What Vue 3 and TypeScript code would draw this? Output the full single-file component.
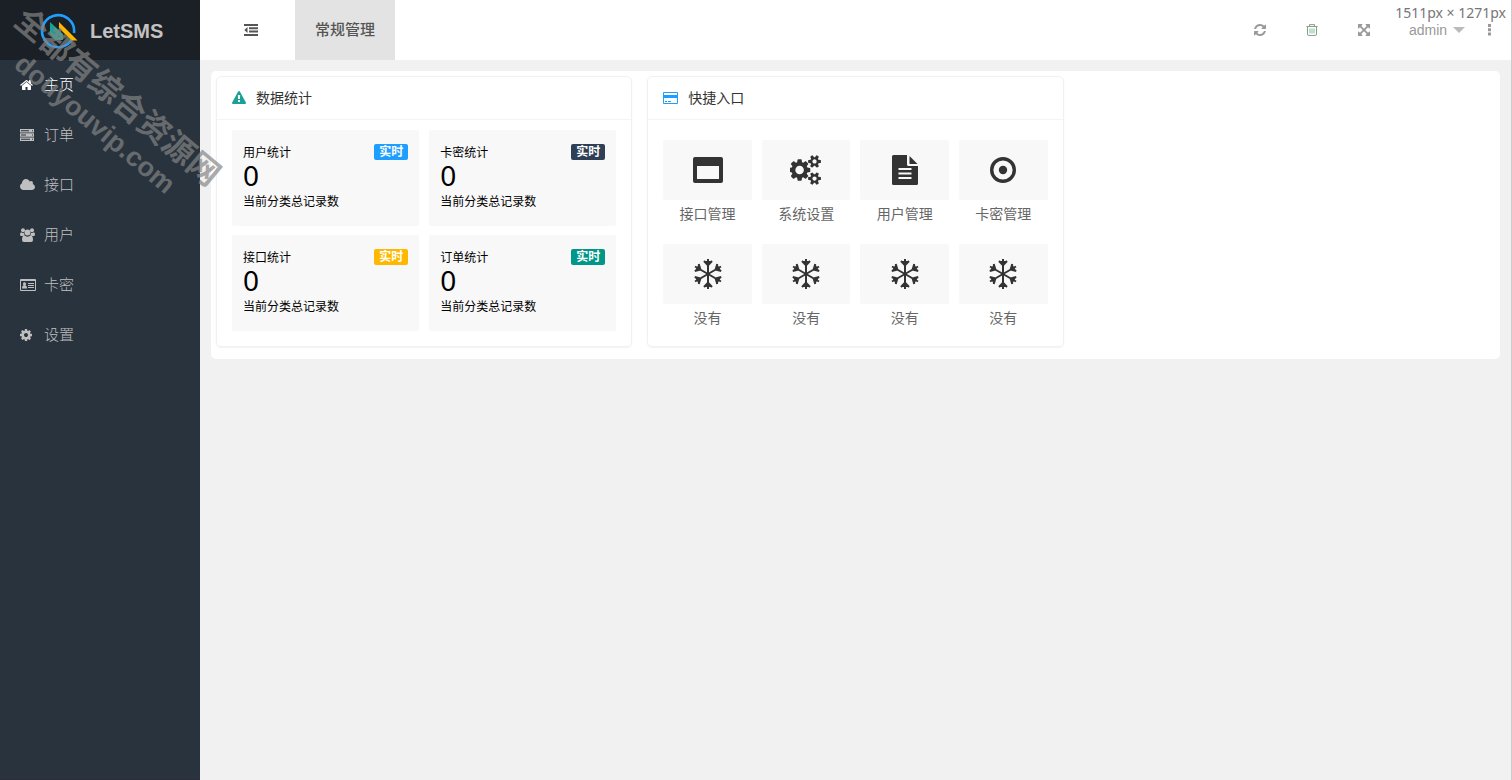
<script setup lang="ts">
import { ref } from 'vue'

interface MenuItem { key: string; label: string }
interface Stat { title: string; value: number; tone: string }
interface Shortcut { label: string; icon: string }

const active = ref('home')

const menu: MenuItem[] = [
  { key: 'home', label: '主页' },
  { key: 'order', label: '订单' },
  { key: 'api', label: '接口' },
  { key: 'users', label: '用户' },
  { key: 'card', label: '卡密' },
  { key: 'cog', label: '设置' },
]

const stats: Stat[] = [
  { title: '用户统计', value: 0, tone: 'blue' },
  { title: '卡密统计', value: 0, tone: 'navy' },
  { title: '接口统计', value: 0, tone: 'orange' },
  { title: '订单统计', value: 0, tone: 'green' },
]

const shortcuts: Shortcut[] = [
  { label: '接口管理', icon: 'window' },
  { label: '系统设置', icon: 'cogs' },
  { label: '用户管理', icon: 'file' },
  { label: '卡密管理', icon: 'target' },
  { label: '没有', icon: 'snow' },
  { label: '没有', icon: 'snow' },
  { label: '没有', icon: 'snow' },
  { label: '没有', icon: 'snow' },
]
</script>

<template>
  <div class="app">
    <aside class="side">
      <a class="brand" href="#">
        <svg class="logo" viewBox="1 0 38 36" aria-hidden="true">
          <path d="M33.8 24.5A16 16 0 1 1 35 20" fill="none" stroke="#1e9fff" stroke-width="2.6" />
          <path d="M11 9l13 12v6H11z" fill="#16a394" />
          <path d="M11 21l5 6h-5z" fill="#1a2026" />
          <path d="M20 9l18.500 18.500h-6L20 15z" fill="#ffb800" />
        </svg>
        <span>LetSMS</span>
      </a>
      <nav>
        <a
          v-for="item in menu"
          :key="item.key"
          href="#"
          class="menu-item"
          :class="{ active: active === item.key }"
          @click.prevent="active = item.key"
        >
          <svg v-if="item.key === 'home'" class="mi" viewBox="64 0 2304 1792"><path d="M1472 992v480q0 26-19 45t-45 19h-384v-384h-256v384h-384q-26 0-45-19t-19-45v-480q0-1 .5-3t.5-3l575-474 575 474q1 2 1 6zm223-69l-62 74q-8 9-21 11h-3q-13 0-21-7l-692-577-692 577q-12 8-24 7-13-2-21-11l-62-74q-8-10-7-23.500t11-21.500l719-599q32-26 76-26t76 26l244 204v-195q0-14 9-23t23-9h192q14 0 23 9t9 23v408l219 182q10 8 11 21.500t-7 23.500z" /></svg>
          <svg v-else-if="item.key === 'order'" class="mi" viewBox="0 0 18 14">
            <path fill-rule="evenodd" d="M0 1h14v3.500H0zM1 2.200v1h8v-1zM12 2.200v1h1v-1zM0 5.250h14v3.500H0zM1 6.500v1h5v-1zM12 6.500v1h1v-1zM0 9.500h14V13H0zM1 10.800v1h9v-1zM12 10.800v1h1v-1z" />
          </svg>
          <svg v-else-if="item.key === 'api'" class="mi" viewBox="64 0 2304 1792"><path d="M1984 1152q0 159-112.500 271.500t-271.500 112.500h-1088q-185 0-316.500-131.500t-131.500-316.500q0-132 71-241.500t187-163.500q-2-28-2-43 0-212 150-362t362-150q158 0 286.500 88t187.500 230q70-62 166-62 106 0 181 75t75 181q0 75-41 138 129 30 213 134.500t84 239.500z" /></svg>
          <svg v-else-if="item.key === 'users'" class="mi" viewBox="0 0 18 14">
            <circle cx="3" cy="2.200" r="2" /><circle cx="12" cy="2.200" r="2" />
            <circle cx="7.500" cy="4.500" r="3" />
            <path d="M1.200 4.300q1.200 1 2.700.500.100 1.600 1 2.400-1.300.100-2 .900H1.500Q0 8.100 0 6.700 0 4.500 1.200 4.300zM13.800 4.300q-1.200 1-2.700.500-.100 1.600-1 2.400 1.300.100 2 .900h1.400Q15 8.100 15 6.700q0-2.200-1.200-2.400zM4.500 7.600q3 2.200 6 0Q13 7.600 13 12q0 2-2 2H4q-2 0-2-2 0-4.400 2.500-4.400z" />
          </svg>
          <svg v-else-if="item.key === 'card'" class="mi" viewBox="0 0 18 14">
            <path fill-rule="evenodd" d="M1 1h14q1 0 1 1v10q0 1-1 1H1q-1 0-1-1V2q0-1 1-1zM1 3v9h14V3z" />
            <circle cx="4.500" cy="5.800" r="1.600" /><path d="M2 10.500q0-3.500 2.500-3.500T7 10.500zM8 5h6v1H8zM8 7h6v1H8zM8 9h6v1H8z" />
          </svg>
          <svg v-else class="mi" viewBox="128 0 2304 1792"><path d="M1152 896q0-106-75-181t-181-75-181 75-75 181 75 181 181 75 181-75 75-181zm512-109v222q0 12-8 23t-20 13l-185 28q-19 54-39 91 35 50 107 138 10 12 10 25t-9 23q-27 37-99 108t-94 71q-12 0-26-9l-138-108q-44 23-91 38-16 136-29 186-7 28-36 28h-222q-14 0-24.500-8.500t-11.500-21.500l-28-184q-49-16-90-37l-141 107q-10 9-25 9-14 0-25-11-126-114-165-168-7-10-7-23 0-12 8-23 15-21 51-66.500t54-70.500q-27-50-41-99l-183-27q-13-2-21-12.500t-8-23.500v-222q0-12 8-23t19-13l186-28q14-46 39-92-40-57-107-138-10-12-10-24 0-10 9-23 26-36 98.500-107.500t94.500-71.500q13 0 26 10l138 107q44-23 91-38 16-136 29-186 7-28 36-28h222q14 0 24.500 8.500t11.500 21.500l28 184q49 16 90 37l142-107q9-9 24-9 13 0 25 10 129 119 165 170 7 8 7 22 0 12-8 23-15 21-51 66.500t-54 70.500q26 50 41 98l183 28q13 2 21 12.500t8 23.500z" /></svg>
          <span class="label">{{ item.label }}</span>
        </a>
      </nav>
    </aside>

    <div class="main">
      <header class="top">
        <button class="fold" type="button" aria-label="收起菜单">
          <svg width="14" height="12" viewBox="0 0 14 12"><path d="M0 0h14v2H0zM5 3.300h9v2H5zM5 6.600h9v2H5zM0 10h14v2H0zM3.500 3v6L.300 6z" /></svg>
        </button>
        <button class="tab" type="button">常规管理</button>
        <div class="tools">
          <button class="tool" type="button" aria-label="刷新">
            <svg width="14" height="14" viewBox="0 0 1792 1792"><path d="M1639 1056q0 5-1 7-64 268-268 434.500t-478 166.500q-146 0-282.500-55t-243.500-157l-129 129q-19 19-45 19t-45-19-19-45v-448q0-26 19-45t45-19h448q26 0 45 19t19 45-19 45l-137 137q71 66 161 102t187 36q134 0 250-65t186-179q11-17 53-117 8-23 30-23h192q13 0 22.500 9.500t9.500 22.500zm25-800v448q0 26-19 45t-45 19h-448q-26 0-45-19t-19-45 19-45l138-138q-148-137-349-137-134 0-250 65t-186 179q-11 17-53 117-8 23-30 23h-199q-13 0-22.500-9.500t-9.500-22.500v-7q65-268 270-434.500t480-166.500q146 0 284 55.500t245 156.500l130-129q19-19 45-19t45 19 19 45z" /></svg>
          </button>
          <button class="tool" type="button" aria-label="清理缓存">
            <svg class="trash" width="12" height="12" viewBox="0 0 12 12"><path d="M.500 2.500h11M3.500 2.300V.600h5v1.700M1.500 2.700V10q0 1.500 1.300 1.500h6.400q1.300 0 1.300-1.500V2.700" stroke="#8f9a90" /><path d="M4 4.500v5M6 4.500v5M8 4.500v5" stroke="#7cc48c" /></svg>
          </button>
          <button class="tool" type="button" aria-label="全屏">
            <svg width="14" height="14" viewBox="0 0 1792 1792"><path d="M1411 541l-355 355 355 355 144-144q29-31 70-14 39 17 39 59v448q0 26-19 45t-45 19h-448q-42 0-59-40-17-39 14-69l144-144-355-355-355 355 144 144q31 30 14 69-17 40-59 40h-448q-26 0-45-19t-19-45v-448q0-42 40-59 39-17 69 14l144 144 355-355-355-355-144 144q-19 19-45 19-12 0-24-5-40-17-40-59v-448q0-26 19-45t45-19h448q42 0 59 40 17 39-14 69l-144 144 355 355 355-355-144-144q-31-30-14-69 17-40 59-40h448q26 0 45 19t19 45v448q0 42-39 59-13 5-25 5-26 0-45-19z" /></svg>
          </button>
          <button class="user" type="button">admin<i class="caret"></i></button>
          <button class="more" type="button" aria-label="更多">
            <svg width="3" height="12" viewBox="0 0 3 12"><path d="M0 0h3v3H0zM0 4.300h3v3H0zM0 8.600h3v3H0z" /></svg>
          </button>
        </div>
      </header>

      <main class="page">
        <div class="panel">
          <section class="card">
            <h2 class="card-head">
              <svg width="14" height="14" viewBox="0 0 1792 1792" fill="#1aa094"><path d="M1024 1375v-190q0-14-9.500-23.500t-22.500-9.500h-192q-13 0-22.500 9.500t-9.500 23.500v190q0 14 9.500 23.500t22.500 9.500h192q13 0 22.500-9.500t9.500-23.500zm-2-374l18-459q0-12-10-19-13-11-24-11h-220q-11 0-24 11-10 7-10 21l17 457q0 10 10 16.500t24 6.500h185q14 0 23.500-6.500t10.500-16.500zm-14-934l768 1408q35 63-2 126-17 29-46.500 46t-63.500 17h-1536q-34 0-63.500-17t-46.500-46q-37-63-2-126l768-1408q17-31 47-49t65-18 65 18 47 49z" /></svg>
              <span class="label">数据统计</span>
            </h2>
            <div class="stats">
              <div v-for="s in stats" :key="s.title" class="stat">
                <div class="stat-top">
                  <span>{{ s.title }}</span>
                  <b class="badge" :class="s.tone">实时</b>
                </div>
                <div class="value">{{ s.value }}</div>
                <div class="note">当前分类总记录数</div>
              </div>
            </div>
          </section>

          <section class="card">
            <h2 class="card-head">
              <svg width="15" height="12" viewBox="0 0 15 12" fill="#1e9fff"><path fill-rule="evenodd" d="M1 0h13q1 0 1 1v10q0 1-1 1H1q-1 0-1-1V1q0-1 1-1zM1 1v2h13V1zM1 6v5h13V6zM2 9h2v1H2zM5 9h3v1H5z" /></svg>
              <span class="label">快捷入口</span>
            </h2>
            <div class="shortcuts">
              <a v-for="(s, i) in shortcuts" :key="i" href="#" class="shortcut">
                <span class="tile">
                  <svg v-if="s.icon === 'window'" width="30" height="26" viewBox="0 0 30 26"><path fill-rule="evenodd" d="M2 0h26q2 0 2 2v22q0 2-2 2H2q-2 0-2-2V2q0-2 2-2zM4 9v13h22V9z" /></svg>
                  <svg v-else-if="s.icon === 'cogs'" width="32" height="30" viewBox="0 0 1920 1792"><path d="M832 896q0-106-75-181t-181-75-181 75-75 181 75 181 181 75 181-75 75-181zm768 512q0-52-38-90t-90-38-90 38-38 90q0 53 37.500 90.500t90.500 37.500 90.500-37.500 37.500-90.500zm0-1024q0-52-38-90t-90-38-90 38-38 90q0 53 37.500 90.500t90.500 37.500 90.500-37.500 37.500-90.500zm-384 421v185q0 10-7 19.500t-16 10.500l-155 24q-11 35-32 76 34 48 90 115 7 11 7 20 0 12-7 19-23 30-82.500 89.500t-78.500 59.500q-11 0-21-7l-115-90q-37 19-77 31-11 108-23 155-7 24-30 24h-186q-11 0-20-7.500t-10-17.500l-23-153q-34-10-75-31l-118 89q-7 7-20 7-11 0-21-8-144-133-144-160 0-9 7-19 10-14 41-53t47-61q-23-44-35-82l-152-24q-10-1-17-9.500t-7-19.500v-185q0-10 7-19.500t16-10.500l155-24q11-35 32-76-34-48-90-115-7-11-7-20 0-12 7-20 22-30 82-89t79-59q11 0 21 7l115 90q34-18 77-32 11-108 23-154 7-24 30-24h186q11 0 20 7.500t10 17.500l23 153q34 10 75 31l118-89q8-7 20-7 11 0 21 8 144 133 144 160 0 8-7 19-12 16-42 54t-45 60q23 48 34 82l152 23q10 2 17 10.500t7 19.500zm640 533v140q0 16-149 31-12 27-30 52 51 113 51 138 0 4-4 7-122 71-124 71-8 0-46-47t-52-68q-20 2-30 2t-30-2q-14 21-52 68t-46 47q-2 0-124-71-4-3-4-7 0-25 51-138-18-25-30-52-149-15-149-31v-140q0-16 149-31 13-29 30-52-51-113-51-138 0-4 4-7 4-2 35-20t59-34 30-16q8 0 46 46.500t52 67.500q20-2 30-2t30 2q51-71 92-112l6-2q4 0 124 70 4 3 4 7 0 25-51 138 17 23 30 52 149 15 149 31zm0-1024v140q0 16-149 31-12 27-30 52 51 113 51 138 0 4-4 7-122 71-124 71-8 0-46-47t-52-68q-20 2-30 2t-30-2q-14 21-52 68t-46 47q-2 0-124-71-4-3-4-7 0-25 51-138-18-25-30-52-149-15-149-31v-140q0-16 149-31 13-29 30-52-51-113-51-138 0-4 4-7 4-2 35-20t59-34 30-16q8 0 46 46.500t52 67.500q20-2 30-2t30 2q51-71 92-112l6-2q4 0 124 70 4 3 4 7 0 25-51 138 17 23 30 52 149 15 149 31z" /></svg>
                  <svg v-else-if="s.icon === 'file'" width="26" height="30" viewBox="0 0 26 30"><path fill-rule="evenodd" d="M1.500 0H15v9.500q0 1.500 1.500 1.500H26v17.500q0 1.500-1.500 1.500h-23Q0 30 0 28.500v-27Q0 0 1.500 0zM6.500 13v2h13v-2zM6.500 17.500v2h13v-2zM6.500 22v2h13v-2zM17.500 1l8 8h-8z" /></svg>
                  <svg v-else-if="s.icon === 'target'" width="26" height="26" viewBox="0 0 26 26"><circle cx="13" cy="13" r="11.300" fill="none" stroke="#333" stroke-width="3.400" /><circle cx="13" cy="13" r="4.200" /></svg>
                  <svg v-else width="28" height="30" viewBox="-14 -15 28 30" fill="none" stroke="#333" stroke-width="2">
                    <path v-for="a in 6" :key="a" :transform="`rotate(${a * 60})`" d="M0 0V-15M-4-13L0-8.800 4-13" />
                  </svg>
                </span>
                <span class="name">{{ s.label }}</span>
              </a>
            </div>
          </section>
        </div>
      </main>
    </div>

    <div class="size-tip">1511px × 1271px</div>
    <div class="watermark" aria-hidden="true">
      <div class="wm-name">全都有综合资源网</div>
      <div class="wm-site">douyouvip.com</div>
    </div>
  </div>
</template>

<style>
body {
  margin: 0;
  background: #f1f1f1;
}
</style>

<style scoped>
* {
  box-sizing: border-box;
}
.app {
  position: relative;
  display: flex;
  min-height: 100vh;
  overflow: hidden;
  background: #f1f1f1;
  border-right: 1px solid #ccc;
  font-family: "Noto Sans", "Noto Sans CJK SC", sans-serif;
  font-size: 14px;
  color: #333;
}
a {
  color: inherit;
  text-decoration: none;
}
button {
  border: 0;
  padding: 0;
  background: none;
  font: inherit;
  color: inherit;
  cursor: pointer;
}
svg {
  display: block;
  flex: none;
}
.side {
  flex: none;
  width: 200px;
  background: #29333d;
  border-bottom: 1px solid #2b2e3a;
  color: #bfbfbf;
}
.side svg {
  fill: currentColor;
}
.brand {
  display: flex;
  align-items: center;
  gap: 12px;
  height: 60px;
  padding: 2px 0 0 40px;
  background: #1a2026;
  color: #c4c1c1;
  font: bold 20px "Liberation Sans", sans-serif;
}
.logo {
  width: 38px;
  height: 36px;
}
.menu-item {
  display: flex;
  align-items: center;
  gap: 6px;
  height: 50px;
  padding-left: 20px;
  font-size: 15px;
  font-family: "Noto Sans CJK SC", sans-serif;
  font-weight: 300;
}
.menu-item.active {
  color: #fff;
}
.mi {
  width: 18px;
  height: 14px;
}
.label {
  padding-bottom: 3px;
}
.main {
  flex: 1;
  min-width: 0;
}
.top {
  display: flex;
  height: 60px;
  background: #fff;
  color: #999;
}
.top svg {
  fill: currentColor;
}
.top .trash {
  fill: none;
}
.fold {
  display: flex;
  align-items: center;
  justify-content: center;
  width: 95px;
  padding-left: 7px;
  color: #555;
}
.tab {
  width: 100px;
  padding-bottom: 3px;
  background: #e3e3e3;
  color: #555;
  font-family: "Noto Sans CJK SC", sans-serif;
  font-size: 15px;
  font-weight: 500;
}
.tools {
  display: flex;
  margin-left: auto;
  padding-right: 7px;
}
.tool {
  display: flex;
  align-items: center;
  justify-content: center;
  width: 52px;
}
.user {
  display: flex;
  align-items: center;
  gap: 6px;
  width: 84px;
  padding-left: 19px;
  font-family: "Liberation Sans", sans-serif;
}
.caret {
  border: 6px solid transparent;
  border-top-color: #bbb;
  border-bottom-width: 0;
}
.more {
  display: flex;
  align-items: center;
  justify-content: center;
  width: 30px;
}
.page {
  padding: 11px;
}
.panel {
  display: grid;
  grid-template-columns: repeat(3, 1fr);
  gap: 15px;
  padding: 5px 5px 12px;
  background: #fff;
  border-radius: 5px;
}
.card {
  border: 1px solid #f1f1f1;
  border-radius: 5px;
  box-shadow: 0 1px 2px #0000000d;
}
.card-head {
  display: flex;
  align-items: center;
  gap: 10px;
  height: 43px;
  margin: 0;
  padding: 0 15px;
  border-bottom: 1px solid #f4f4f4;
  font-size: 14px;
  font-weight: 400;
}
.stats {
  display: grid;
  grid-template-columns: 1fr 1fr;
  gap: 9px 10px;
  padding: 10px 15px 15px;
}
.stat {
  padding: 11px 11px 13px;
  background: #f8f8f8;
  border-radius: 2px;
  color: #000;
  font-size: 12px;
}
.stat-top {
  display: flex;
  align-items: center;
  justify-content: space-between;
  height: 22px;
}
.badge {
  padding: 0 5px;
  border-radius: 2px;
  color: #fff;
  line-height: 16px;
}
.blue {
  background: #1e9fff;
}
.navy {
  background: #2f4056;
}
.orange {
  background: #ffb800;
}
.green {
  background: #009688;
}
.value {
  padding-bottom: 4px;
  font-size: 28px;
  line-height: 24px;
}
.note {
  line-height: 22px;
}
.shortcuts {
  display: grid;
  grid-template-columns: repeat(4, 1fr);
  gap: 16px 10px;
  padding: 20px 15px 0;
}
.tile {
  display: flex;
  align-items: center;
  justify-content: center;
  height: 60px;
  background: #f8f8f8;
  border-radius: 2px;
}
.tile svg {
  fill: #333;
}
.name {
  display: block;
  color: #666;
  line-height: 28px;
  text-align: center;
}
.size-tip {
  position: absolute;
  top: 3px;
  right: 5px;
  color: #777;
  line-height: 20px;
}
.watermark {
  position: absolute;
  left: 106px;
  top: 111px;
  color: #858585b0;
  font-family: "Liberation Sans", "Noto Sans CJK SC", sans-serif;
  font-weight: 700;
  line-height: 35px;
  text-align: center;
  white-space: nowrap;
  pointer-events: none;
  transform: translate(-50%, -50%) rotate(40deg);
}
.wm-name {
  font-size: 32px;
}
.wm-site {
  font-size: 27px;
}
</style>
